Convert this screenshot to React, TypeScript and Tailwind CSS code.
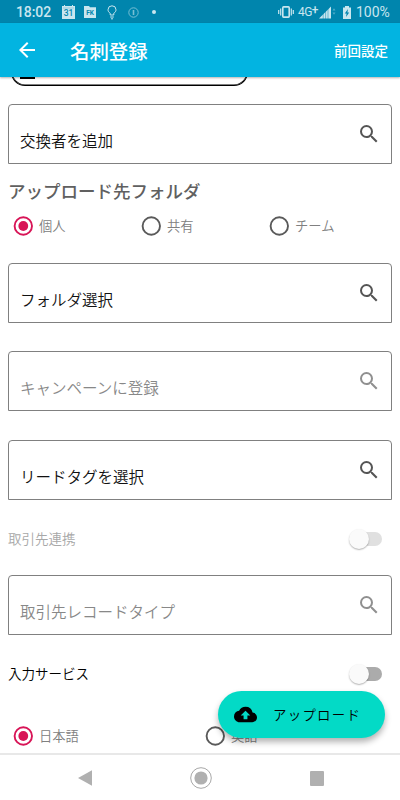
import React, { useState } from 'react'
import { MdArrowBack, MdBackup, MdSearch } from 'react-icons/md'

interface SelectFieldProps {
  label: string
  disabled?: boolean
}

interface RadioProps {
  label: string
  checked: boolean
  onSelect: () => void
}

interface ToggleRowProps {
  label: string
  disabled?: boolean
}

const FOLDERS = ['個人', '共有', 'チーム']
const LANGUAGES = ['日本語', '英語']

function SelectField({ label, disabled }: SelectFieldProps) {
  return (
    <button
      disabled={disabled}
      className="flex h-[60px] w-full flex-shrink-0 items-start justify-between rounded-t-[4px] border border-[#808080] pl-[11px] pr-[10px] text-left"
    >
      <span className={`mt-[23px] text-[15.5px] font-[350] leading-6 ${disabled ? 'text-[#888888]' : 'text-[#111111]'}`}>
        {label}
      </span>
      <MdSearch size={24} className={`mt-[17px] ${disabled ? 'text-[#909090]' : 'text-[#555555]'}`} />
    </button>
  )
}

function Radio({ label, checked, onSelect }: RadioProps) {
  return (
    <button onClick={onSelect} className="flex items-center gap-[6px] pl-[5px]">
      <svg width="20" height="20" viewBox="0 0 20 20" fill="none">
        <circle cx="10.3" cy="10" r="8.7" stroke={checked ? '#d81557' : '#5a5a5a'} strokeWidth="1.9" />
        {checked && <circle cx="10.3" cy="10" r="4.9" fill="#d81557" />}
      </svg>
      <span className="text-[13.3px] font-[350] leading-5 text-[#808080]">{label}</span>
    </button>
  )
}

function ToggleRow({ label, disabled }: ToggleRowProps) {
  return (
    <div className="flex h-6 flex-shrink-0 items-center justify-between pr-[10px]">
      <span className={`text-[13.5px] font-[350] leading-5 ${disabled ? '-mt-px text-[#a8a8a8]' : '-mt-px text-black'}`}>
        {label}
      </span>
      <div className={`flex h-[14px] w-[32px] items-center rounded-full ${disabled ? 'bg-[#e0e0e0]' : 'bg-[#ababab]'}`}>
        <div className="-ml-px h-5 w-5 flex-shrink-0 rounded-full bg-[#fafafa] shadow-[0_1px_1.5px_rgba(0,0,0,0.3)]" />
      </div>
    </div>
  )
}

function StatusBar() {
  return (
    <div className="flex h-[23px] flex-shrink-0 items-center bg-[#0085ad] pl-[16px] pr-[11px] pt-px font-[Roboto,sans-serif] text-[#c9e6ef]">
      <span className="w-[46px] text-[14px] font-medium leading-none tracking-[-0.1px]">18:02</span>

      {/* calendar */}
      <svg width="13" height="14" viewBox="0 0 13 14">
        <path d="M0 1h2V0h1v1h7V0h1v1h2v13H0z" fill="currentColor" />
        <path d="M1 3h11" stroke="#0085ad" strokeWidth="0.5" opacity="0.5" />
        <text x="6.5" y="11" textAnchor="middle" fontSize="8.5" fontWeight="500" fill="#0085ad">31</text>
      </svg>
      {/* folder */}
      <svg width="12" height="12" viewBox="0 0 12 12" className="ml-[9px]">
        <path d="M0 0h5l1 1.2h6V12H0z" fill="currentColor" />
        <text x="6" y="9" textAnchor="middle" fontSize="6.5" fontWeight="700" fill="#0085ad">FK</text>
      </svg>
      {/* bulb */}
      <svg width="10" height="15" viewBox="0 0 10 15" fill="none" stroke="currentColor" className="ml-[11px]">
        <path d="M3.2 10V8.2C1.8 7.4 1 6.2 1 4.8a4 4 0 0 1 8 0c0 1.4-.8 2.6-2.2 3.4V10zM3.2 12h3.6M4 13.8h2" />
      </svg>
      <svg width="11" height="11" viewBox="0 0 11 11" fill="none" stroke="currentColor" className="ml-[11px] opacity-60">
        <circle cx="5.5" cy="5.5" r="4.7" />
        <path d="M5.5 3v5" strokeWidth="1.6" />
      </svg>
      <span className="ml-[13px] h-[4px] w-[4px] rounded-full bg-current" />

      {/* vibrate */}
      <svg width="16" height="12" viewBox="0 0 16 12" fill="none" stroke="currentColor" className="ml-auto">
        <rect x="4.8" y="0.9" width="6.4" height="10.2" rx="0.8" strokeWidth="1.6" />
        <path d="M2.7 2.5v7M13.3 2.5v7M.7 4v4M15.3 4v4" strokeWidth="1.2" />
      </svg>
      <span className="ml-[4px] w-[21px] whitespace-nowrap text-[12px] leading-none tracking-[-0.6px]">
        4G<span className="relative -top-[2px] font-medium">+</span>
      </span>
      {/* signal */}
      <svg width="17" height="13" viewBox="0 0 17 13">
        <path d="M0 12.5 12 .5v12z" fill="currentColor" />
        <path d="M4.2 6v7M6.6 4v9M9 2v11" stroke="#0085ad" strokeWidth="0.5" />
        <path d="M13.5 4.5 15 2.2l1.5 2.3zM13.5 6.5 15 8.8l1.5-2.3z" fill="currentColor" opacity="0.4" />
      </svg>
      {/* battery */}
      <svg width="8" height="13" viewBox="0 0 8 13" className="ml-[7px]">
        <path d="M0 1.5h2V0h4v1.5h2V13H0z" fill="currentColor" />
        <path d="M5 3 1.8 7.6h1.8L3 11l3.2-4.6H4.4z" fill="#0085ad" />
      </svg>
      <span className="ml-[5px] w-[33px] whitespace-nowrap text-[14px] leading-none">100%</span>
    </div>
  )
}

export default function App() {
  const [folder, setFolder] = useState('個人')
  const [language, setLanguage] = useState('日本語')

  return (
    <div className="relative flex h-[800px] w-[400px] flex-col overflow-hidden bg-white font-['Noto_Sans_CJK_JP',sans-serif]">
      <StatusBar />

      {/* ── App bar ── */}
      <header className="z-10 flex h-[54px] flex-shrink-0 items-center bg-[#02b4e1] pl-[15px] pr-[12px] text-white shadow-[0_1px_2px_rgba(0,0,0,0.3)]">
        <MdArrowBack size={24} />
        <h1 className="ml-[31px] mt-px text-[19.4px] font-medium leading-none">名刺登録</h1>
        <button className="ml-auto mt-px text-[13.5px] font-medium leading-none">前回設定</button>
      </header>

      {/* ── Form ── */}
      <main className="flex flex-1 flex-col overflow-hidden px-2">
        <div className="ml-[3px] flex h-[9px] w-[237px] flex-shrink-0 flex-col justify-end overflow-hidden">
          <div className="flex h-[36px] flex-shrink-0 items-end rounded-[14px] border-x border-b-[1.5px] border-black pb-[6px] pl-[8px] shadow-[inset_0_0_0_0.6px_#000]">
            <div className="h-[3px] w-[15px] bg-black" />
          </div>
        </div>

        <div className="mt-[18px] flex-shrink-0">
          <SelectField label="交換者を追加" />
        </div>

        <h2 className="mt-[15px] flex-shrink-0 text-[17.5px] font-medium leading-6 text-[#606060]">アップロード先フォルダ</h2>
        <div className="mt-[13px] grid flex-shrink-0 grid-cols-3">
          {FOLDERS.map(f => (
            <Radio key={f} label={f} checked={folder === f} onSelect={() => setFolder(f)} />
          ))}
        </div>

        <div className="mt-[27px] flex flex-shrink-0 flex-col gap-[28.4px]">
          <SelectField label="フォルダ選択" />
          <SelectField label="キャンペーンに登録" disabled />
          <SelectField label="リードタグを選択" />
        </div>

        <div className="mt-[27.2px] flex flex-shrink-0 flex-col gap-6">
          <ToggleRow label="取引先連携" disabled />
          <SelectField label="取引先レコードタイプ" disabled />
        </div>
        <div className="mt-[27px] flex-shrink-0">
          <ToggleRow label="入力サービス" />
        </div>
        <div className="mt-[40px] grid flex-shrink-0 grid-cols-2">
          {LANGUAGES.map(l => (
            <Radio key={l} label={l} checked={language === l} onSelect={() => setLanguage(l)} />
          ))}
        </div>
      </main>

      {/* ── Upload button ── */}
      <button className="absolute left-[218px] top-[691px] flex h-[47px] w-[167px] items-center rounded-full bg-[#03dac6] pl-[16px] text-black shadow-[0_4px_6px_rgba(0,0,0,0.3)]">
        <MdBackup size={23} />
        <span className="-mt-px ml-[16px] whitespace-nowrap text-[13.4px] font-[350] leading-5 tracking-[1.3px]">アップロード</span>
      </button>

      {/* ── System navigation ── */}
      <nav className="flex h-[47px] flex-shrink-0 items-center border-t-2 border-[#e8e8e8] bg-white pl-[78px] pr-[76px] pb-[1px]">
        <svg width="15" height="16" viewBox="0 0 15 16" className="mt-[2px]">
          <path d="M0 8 14 .3v15.4z" fill="#b0b0b0" />
        </svg>
        <svg width="22" height="22" viewBox="0 0 22 22" className="ml-[97px] mt-[2px]">
          <circle cx="11" cy="11" r="10.3" fill="none" stroke="#a8a8a8" />
          <circle cx="11" cy="11" r="6.6" fill="#b0b0b0" />
        </svg>
        <div className="ml-auto mt-[2px] h-[15px] w-[14px] rounded-[1px] bg-[#b0b0b0]" />
      </nav>
    </div>
  )
}
